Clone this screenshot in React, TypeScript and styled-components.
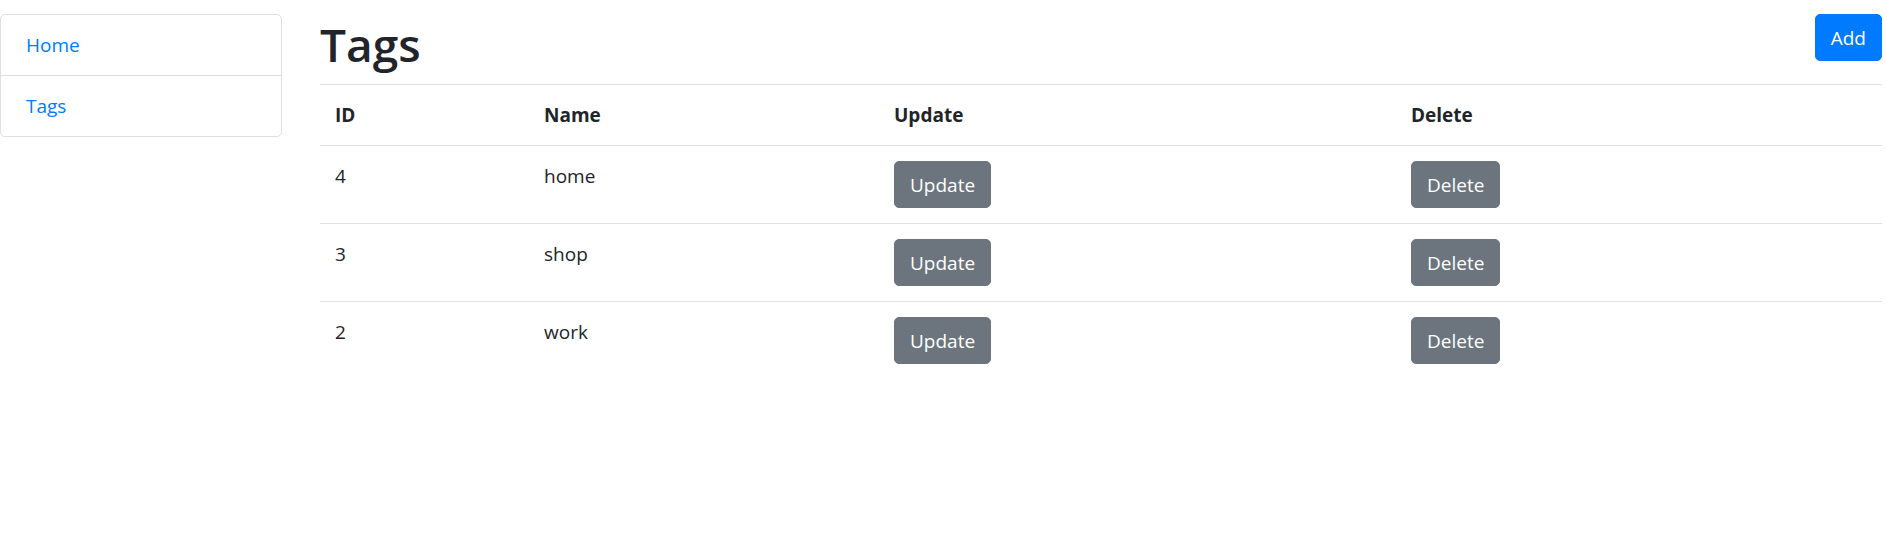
import React from "react";
import styled, { createGlobalStyle } from "styled-components";

const GlobalStyle = createGlobalStyle`
  html, body { margin: 0; padding: 0; background: #fff; }
  body {
    font-family: "Open Sans", "Noto Sans", Arial, sans-serif;
    font-size: 19px;
    line-height: 30px;
    color: #212529;
  }
  * { box-sizing: border-box; }
`;

const Page = styled.div`
  display: flex;
  align-items: flex-start;
  width: 1886px;
  padding: 14px 4px 0 0;
`;

const Sidebar = styled.nav`
  width: 282px;
  flex: 0 0 282px;
  display: flex;
  flex-direction: column;
  border: 1px solid rgba(0, 0, 0, 0.125);
  border-radius: 5px;
`;

const NavItem = styled.a<{ $first?: boolean }>`
  display: block;
  padding: 15px 25px;
  color: #007bff;
  text-decoration: none;
  font-size: 19px;
  line-height: 30px;
  border-top: ${(p) => (p.$first ? "none" : "1px solid rgba(0, 0, 0, 0.125)")};
`;

const Main = styled.main`
  flex: 1;
  margin-left: 38px;
  display: flex;
  flex-direction: column;
`;

const Header = styled.div`
  display: flex;
  justify-content: space-between;
  align-items: flex-start;
`;

const Title = styled.h1`
  margin: 0 0 10px 0;
  font-size: 46px;
  line-height: 60px;
  font-weight: 600;
  color: #212529;
`;

const Button = styled.button<{ $variant: "primary" | "secondary" }>`
  font-family: inherit;
  font-size: 19px;
  line-height: 30px;
  padding: 7.5px 15px;
  border-radius: 5px;
  color: #fff;
  cursor: pointer;
  border: 1px solid ${(p) => (p.$variant === "primary" ? "#007bff" : "#6c757d")};
  background: ${(p) => (p.$variant === "primary" ? "#007bff" : "#6c757d")};
`;

const Table = styled.table`
  width: 100%;
  border-collapse: collapse;
  table-layout: fixed;
  color: #212529;
`;

const Col = styled.col<{ $w: number }>`
  width: ${(p) => p.$w}px;
`;

const HeadCell = styled.th`
  text-align: left;
  font-weight: 700;
  padding: 15px;
  vertical-align: top;
  border-top: 1px solid #dee2e6;
  line-height: 30px;
`;

const Cell = styled.td`
  padding: 15px;
  vertical-align: top;
  border-top: 1px solid #dee2e6;
  line-height: 30px;
`;

const tags = [
  { id: 4, name: "home" },
  { id: 3, name: "shop" },
  { id: 2, name: "work" },
];

export default function App() {
  return (
    <>
      <GlobalStyle />
      <Page>
        <Sidebar>
          <NavItem href="#" $first>Home</NavItem>
          <NavItem href="#">Tags</NavItem>
        </Sidebar>
        <Main>
          <Header>
            <Title>Tags</Title>
            <Button $variant="primary">Add</Button>
          </Header>
          <Table>
            <colgroup>
              <Col $w={209} />
              <Col $w={350} />
              <Col $w={517} />
              <Col $w={486} />
            </colgroup>
            <thead>
              <tr>
                <HeadCell>ID</HeadCell>
                <HeadCell>Name</HeadCell>
                <HeadCell>Update</HeadCell>
                <HeadCell>Delete</HeadCell>
              </tr>
            </thead>
            <tbody>
              {tags.map((t) => (
                <tr key={t.id}>
                  <Cell>{t.id}</Cell>
                  <Cell>{t.name}</Cell>
                  <Cell>
                    <Button $variant="secondary">Update</Button>
                  </Cell>
                  <Cell>
                    <Button $variant="secondary">Delete</Button>
                  </Cell>
                </tr>
              ))}
            </tbody>
          </Table>
        </Main>
      </Page>
    </>
  );
}
